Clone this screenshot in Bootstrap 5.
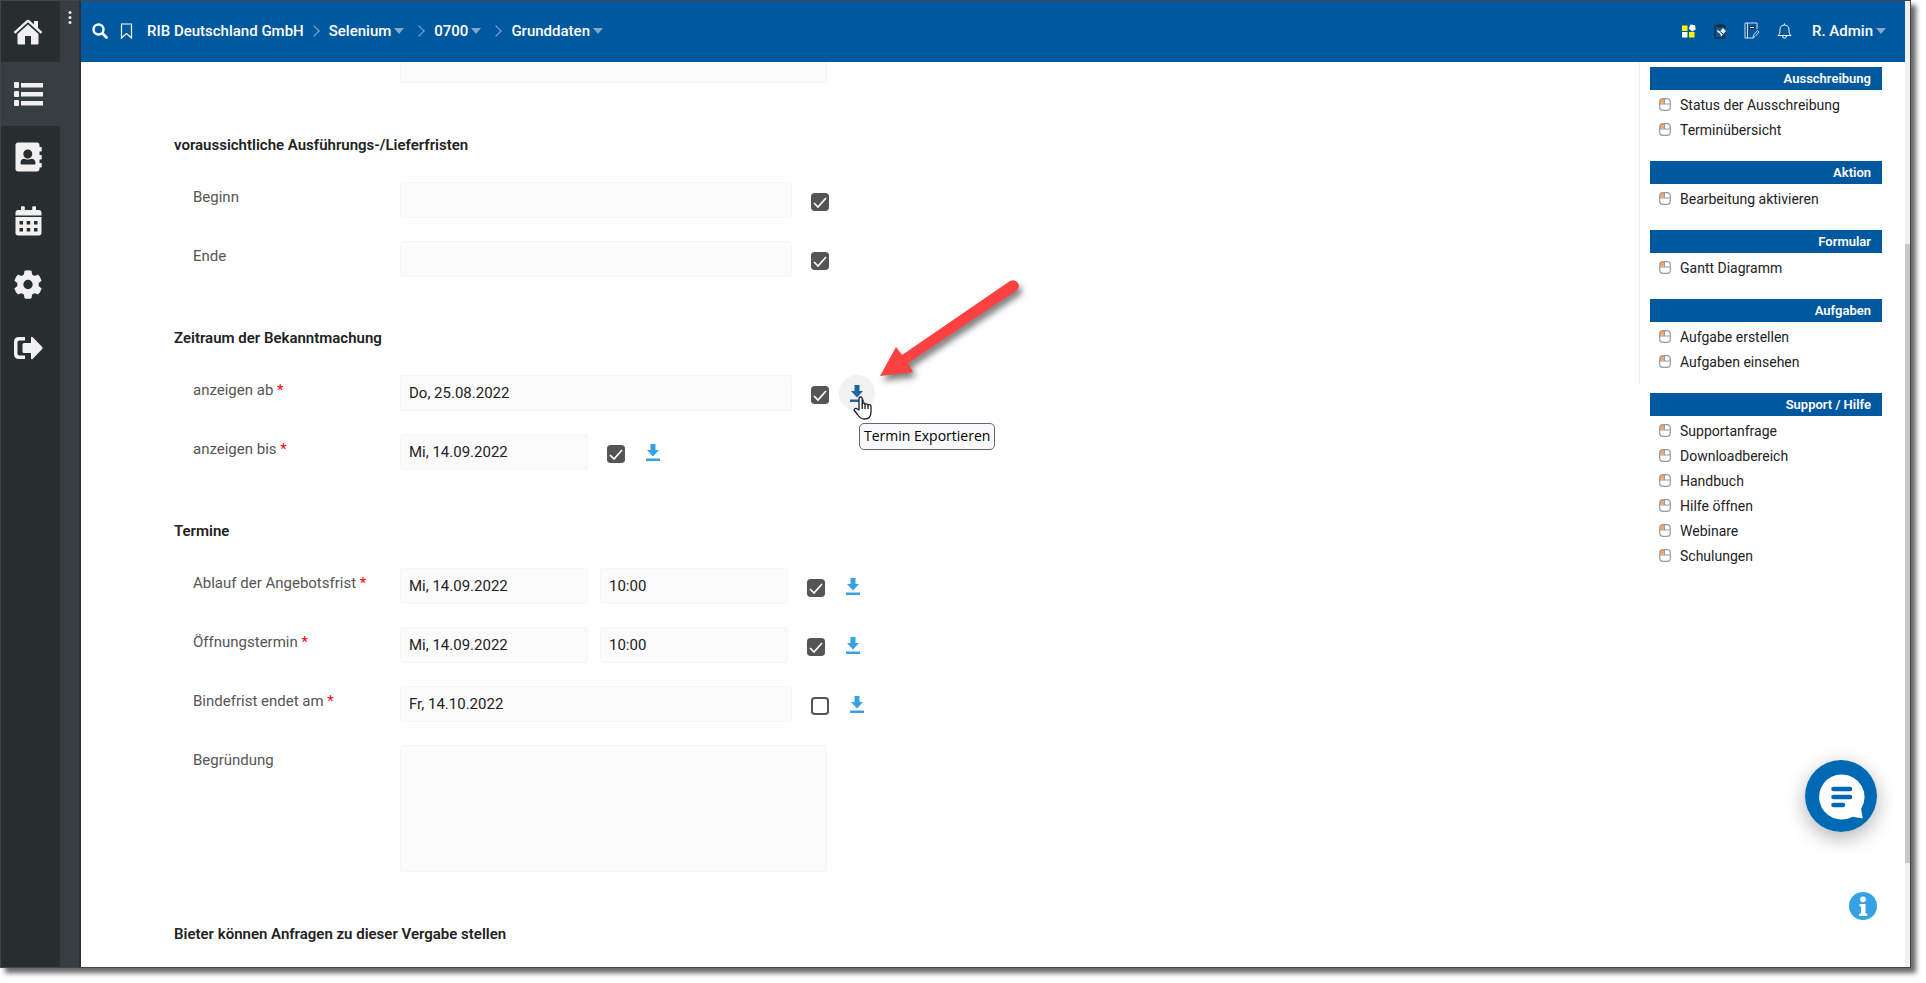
<!DOCTYPE html>
<html lang="de">
<head>
<meta charset="utf-8">
<meta name="viewport" content="width=device-width, initial-scale=1">
<title>Grunddaten</title>
<link href="https://cdn.jsdelivr.net/npm/bootstrap@5.3.0/dist/css/bootstrap.min.css" rel="stylesheet">
<style>
  :root { --brand: #00589f; --ink: #222; --sky: #36a2e4; }
  body { font-family: Roboto, "Liberation Sans", sans-serif; font-size: 15px; line-height: 20px; color: var(--ink); background: #fff; height: 100vh; overflow: hidden; padding: 0 15px 15px 0; }
  .window { height: 100%; border: 1px solid #434446; box-shadow: 5px 5px 5px rgba(0,0,0,.6); background: #fff; }
  .rail { width: 59px; background: #282d2f; }
  .rail ul { display: grid; grid-template-rows: 61px repeat(5, 1fr); height: 379px; }
  .rail a { height: 100%; padding-right: 5px; color: #f0f0f0; }
  .rail .current { background: #373e41; }
  .grip { width: 21px; background: #373e41; border-right: 2px solid #2b3033; padding-top: 8px; }
  .topbar { height: 61px; background: var(--brand); padding: 0 19px 2px 11px; color: #fff; font-weight: 500; }
  .topbar a, .topbar button { color: #fff; text-decoration: none; white-space: nowrap; }
  .drop::after { content: ""; display: inline-block; margin-left: 3px; vertical-align: 2px; border: 5px solid transparent; border-top: 6px solid #7fa9cd; border-bottom: 0; }
  .crumbs { margin-left: 14px; }
  .crumbs li { display: flex; align-items: center; }
  .crumbs li + li::before { content: ""; width: 8px; height: 8px; margin: 0 11px 0 6px; border: solid #84add0; border-width: 1px 1px 0 0; transform: rotate(45deg); }
  .crumbs li:nth-child(n+3)::before { margin: 0 11px; }
  .tools { gap: 17px; }
  .tools .user { margin-left: 3px; font-weight: 500; }
  .sheet { padding-left: 93px; overflow: hidden; }
  .scrolled { margin-top: -106px; }
  .block-title { font-size: 15px; line-height: 20px; font-weight: 600; margin: 0 0 27px; }
  .fields { display: grid; gap: 23px; margin-bottom: 51px; }
  .fields.ends-long { margin-bottom: 52px; }
  .line { display: flex; padding-left: 19px; }
  .line > label, .line > .blank { width: 207px; flex: none; padding-top: 5px; color: #555; }
  .req { color: #f00; }
  .box { height: 36px; padding: 0 8px; border: 1px solid #f5f5f5; border-radius: 3px; background: #fbfbfb; font-size: 15px; color: var(--ink); }
  .box-wide { width: 392px; }
  .box-half { width: 188px; }
  .box-half + .box-half { margin-left: 12px; }
  .box-area { width: 427px; height: 127px; resize: none; }
  .tick { width: 18px; height: 18px; margin: 11px 0 0 19px; border: 2px solid #555; border-radius: 4px; flex: none; }
  .tick:checked { background-color: #555; border-color: #555; background-size: 18px; background-image: url("data:image/svg+xml,%3csvg xmlns='http://www.w3.org/2000/svg' viewBox='0 0 18 18'%3e%3cpath d='M3 10l4 4 8-9' fill='none' stroke='white' stroke-width='1.7'/%3e%3c/svg%3e"); }
  .export { position: relative; width: 36px; height: 36px; margin-left: 10px; padding: 0; border: 0; border-radius: 50%; background: none; color: var(--sky); display: flex; align-items: center; justify-content: center; }
  .export.hovered { background: #f1f1f1; color: #1f669d; }
  .hint { position: absolute; left: 20px; top: 48px; padding: 2px 4px 3px; border: 1px solid #666; border-radius: 5px; background: #f9f9fb; color: #000; font: 14px/20px "Open Sans", "Noto Sans", sans-serif; white-space: nowrap; }
  .pointer { position: absolute; left: 14px; top: 21px; }
  .arrow { position: absolute; left: 31px; top: -103px; }
  .side { width: 266px; padding: 5px 23px 0 11px; }
  .side-line { position: relative; }
  .side-line::before { content: ""; position: absolute; left: -11px; top: -5px; bottom: 9px; border-left: 1px solid #eee; }
  .side h3 { margin: 0; height: 23px; padding-right: 11px; line-height: 23px; font-size: 13px; font-weight: 600; text-align: right; color: #fff; background: var(--brand); }
  .side ul { padding: 2px 0 19px 9px; margin: 0; list-style: none; }
  .side a { display: flex; align-items: center; gap: 9px; height: 25px; font-size: 14px; color: var(--ink); text-decoration: none; }
  .track { width: 5px; background: #f0f0f2; }
  .before { flex-grow: 243; } .thumb { flex-grow: 619; background: #c8c8c9; } .after { flex-grow: 104; }
  .floaters { position: absolute; right: 33px; bottom: 47px; display: flex; flex-direction: column; align-items: flex-end; gap: 60px; }
  .floaters button { border: 0; padding: 0; border-radius: 50%; line-height: 0; background: none; }
  .floaters .chat { box-shadow: 0 6px 20px rgba(0,0,0,.3); }
</style>
</head>
<body>
<svg width="0" height="0" class="position-absolute" aria-hidden="true">
  <symbol id="dl" viewBox="0 0 14 17"><path d="M4.500 0h5v6H13L7 12.500 1 6h3.500zM0 14.500h14V17H0z" fill="currentColor"/></symbol>
  <symbol id="mouse" viewBox="0 0 12 13"><path d="M2.500 1H5v4.500H1V3z" fill="#f9a566"/><rect x=".7" y=".7" width="10.600" height="11.600" rx="3.300" fill="none" stroke="#999" stroke-width="1.200"/><path d="M1 6h10M5.500 1v5" stroke="#999" fill="none"/></symbol>
</svg>
<div class="window d-flex position-relative">
  <nav class="rail flex-shrink-0" aria-label="Hauptmenü">
    <ul class="list-unstyled m-0">
      <li><a href="#" class="d-flex align-items-center justify-content-center" aria-label="Start"><svg width="30" height="26" viewBox="0 0 30 26" fill="currentColor"><path d="M15 5.500 4.500 15v9c0 1 .5 1.500 1.500 1.500h6V17h6v8.500h6c1 0 1.500-.5 1.500-1.500v-9z"/><path d="M.7 13 13.300 1.500c1-.9 2.400-.9 3.400 0L21 5.400V2h4v7l4.300 4-1.600 1.700L15 3.300 2.300 14.700z"/></svg></a></li>
      <li class="current"><a href="#" class="d-flex align-items-center justify-content-center" aria-label="Liste"><svg width="30" height="26" viewBox="0 0 30 26" fill="currentColor"><rect x="1" y="1" width="5" height="6" rx="1"/><rect x="1" y="10" width="5" height="6" rx="1"/><rect x="1" y="19" width="5" height="6" rx="1"/><path d="M8 2h22v4.500H8zM8 11h22v4.500H8zM8 20h22v4.500H8z"/></svg></a></li>
      <li><a href="#" class="d-flex align-items-center justify-content-center" aria-label="Kontakte"><svg width="27" height="30" viewBox="0 0 27 30" fill="currentColor"><path fill-rule="evenodd" d="M3 .5h19c1.500 0 2.500 1 2.500 2.500v2h1.500q.8 0 .8.800v3q0 .7-.8.700h-1.500V13H26q.8 0 .8.700v3q0 .8-.8.800h-1.500V21H26q.8 0 .8.700v3q0 .8-.8.800h-1.500V27c0 1.500-1 2.500-2.500 2.500H3C1.500 29.500.5 28.500.5 27V3C.5 1.500 1.500.5 3 .5zM12.800 7.500a4.500 4.500 0 1 0 0 9 4.500 4.500 0 0 0 0-9zM5.500 21c0 1 .5 1.500 1.500 1.500h12c1 0 1.500-.5 1.500-1.500 0-2.500-1.500-4.200-4-4.200-1.500 1-5.800 1-7.300 0-2.500 0-3.700 1.700-3.700 4.200z"/></svg></a></li>
      <li><a href="#" class="d-flex align-items-center justify-content-center" aria-label="Kalender"><svg width="27" height="30" viewBox="0 0 27 30" fill="currentColor"><path d="M.5 9.500V7C.5 5 1.500 4 3 4h3V1q0-.8.800-.8h2q1 0 1 .8v3h7.400V1q0-.8 1-.8h2q.8 0 .8.800v3h3c1.500 0 2.500 1 2.500 3v2.500z"/><path fill-rule="evenodd" d="M.5 11h26v16c0 1.500-1 2.500-2.500 2.500H3C1.500 29.500.5 28.500.5 27zM4.500 15v3.500H8V15zm7.200 0v3.500h3.500V15zm7.300 0v3.500h3.500V15zM4.500 22v3.500H8V22zm7.200 0v3.500h3.500V22zm7.300 0v3.500h3.500V22z"/></svg></a></li>
      <li><a href="#" class="d-flex align-items-center justify-content-center" aria-label="Einstellungen"><svg width="28" height="29" viewBox="0 0 28 29" fill="currentColor"><path fill-rule="evenodd" d="M10.500.8Q14-.2 17.500.8l.6 3.700 2.500 1.400 3.500-1.300q2.600 2.700 3.500 6.100l-2.900 2.400v2.900l2.900 2.400q-.9 3.400-3.500 6.100l-3.500-1.300-2.500 1.400-.6 3.700q-3.500 1-7 0l-.6-3.700-2.500-1.400-3.500 1.300q-2.600-2.700-3.500-6.100L3.300 16v-2.900L.4 10.700q.9-3.400 3.500-6.100l3.500 1.300 2.500-1.400zM14 9.800a4.700 4.700 0 1 0 0 9.400 4.700 4.700 0 0 0 0-9.400z"/></svg></a></li>
      <li><a href="#" class="d-flex align-items-center justify-content-center" aria-label="Abmelden"><svg width="30" height="24" viewBox="0 0 30 24" fill="currentColor"><path d="M12 1v3.500H6.500Q4.500 4.500 4.500 6.500v11q0 2 2 2H12V23H6q-5 0-5-5V6q0-5 5-5z"/><path d="M18 1.500q.4-1.500 1.800-.3L29 10.800q1.200 1.200 0 2.400l-9.200 9.600Q18.400 24 18 22.500V17h-7q-1.500 0-1.500-1.500v-7Q9.500 7 11 7h7z"/></svg></a></li>
    </ul>
  </nav>
  <div class="grip flex-shrink-0 text-center lh-1"><svg width="4" height="16" viewBox="0 0 4 16" fill="#e8e8e8" class="d-block mx-auto"><circle cx="2" cy="3.500" r="1.500"/><circle cx="2" cy="8.500" r="1.500"/><circle cx="2" cy="13.500" r="1.500"/></svg></div>

  <div class="flex-grow-1 d-flex flex-column overflow-hidden">
    <header class="topbar d-flex align-items-center flex-shrink-0">
      <a href="#" aria-label="Suche" class="d-flex"><svg width="16" height="16" viewBox="0 0 16 16" fill="none" stroke="#fff"><circle cx="6.500" cy="6.500" r="5" stroke-width="2.400"/><path d="m10.500 10.500 4 4" stroke-width="2.800" stroke-linecap="round"/></svg></a>
      <a href="#" aria-label="Lesezeichen" class="d-flex ms-2 ps-1"><svg width="13" height="16" viewBox="0 0 13 16" fill="none" stroke="#fff" stroke-width="1.200"><path d="M1.500 1h10v14l-5-4.500-5 4.500z"/></svg></a>
      <ol class="crumbs list-unstyled d-flex mb-0">
        <li><a href="#">RIB Deutschland GmbH</a></li>
        <li><a href="#" class="drop">Selenium</a></li>
        <li><a href="#" class="drop">0700</a></li>
        <li><a href="#" class="drop">Grunddaten</a></li>
      </ol>
      <div class="tools d-flex align-items-center ms-auto">
        <a href="#" aria-label="Module" class="d-flex"><svg width="14" height="14" viewBox="0 0 14 14"><path d="M0 1.500h5.500V7H0zM7 8h5.500v5.500H7z" fill="#fff500"/><path d="M0 8h5.500v5.500H0z" fill="#fff"/><path d="m8.500.5 4.500.8.700 4.200-3.700 2-3.300-3z" fill="#fff"/></svg></a>
        <a href="#" aria-label="Aufgaben" class="d-flex"><svg width="14" height="16" viewBox="0 0 14 16"><path d="M4 2.500h1.500q1.500-3 3 0H11q.5 0 .5.500v12H2V3q0-.5.500-.5z" fill="none" stroke="#222d38" stroke-width="1.600"/><path d="M4 2h6v2.500H4z" fill="#222d38"/><path d="m4 7 3 1.500L10 5l3 3-5 5.500-1-3L4.500 9z" fill="#fff"/><path d="m7 8.500 3 2.500" stroke="#222d38"/></svg></a>
        <a href="#" aria-label="Journal" class="d-flex"><svg width="16" height="17" viewBox="0 0 16 17" fill="none" stroke="#cfdfec"><path d="M9 16H1V1h12v6M3.500 1v15"/><path d="M5.500 4.500h5v2h-5z" stroke="#132a40" fill="#fff"/><path d="m9 16 .5-3 4-4.500 1.500 1.500-4 4.500z"/></svg></a>
        <a href="#" aria-label="Benachrichtigungen" class="d-flex"><svg width="15" height="16" viewBox="0 0 15 16" fill="none" stroke="#fff" stroke-linejoin="round"><path d="M1 12.500c1.500-1.500 2-2.500 2-6C3 3.500 5 2 7.500 2S12 3.500 12 6.500c0 3.500.5 4.500 2 6zM7.500.5V2M5.500 12.700q0 2.500 2 2.500t2-2.500"/></svg></a>
        <button type="button" class="user drop bg-transparent border-0 p-0">R. Admin</button>
      </div>
    </header>

    <div class="d-flex flex-grow-1 overflow-hidden">
      <main class="sheet flex-grow-1">
        <form class="scrolled">
          <div class="fields ends-long">
            <div class="line"><span class="blank"></span><textarea class="box box-area" aria-label="Bemerkung" readonly></textarea></div>
          </div>

          <h2 class="block-title">voraussichtliche Ausführungs-/Lieferfristen</h2>
          <div class="fields">
            <div class="line"><label for="f1">Beginn</label><input id="f1" class="box box-wide" readonly><input type="checkbox" class="form-check-input tick" aria-label="Beginn anzeigen" checked></div>
            <div class="line"><label for="f2">Ende</label><input id="f2" class="box box-wide" readonly><input type="checkbox" class="form-check-input tick" aria-label="Ende anzeigen" checked></div>
          </div>

          <h2 class="block-title">Zeitraum der Bekanntmachung</h2>
          <div class="fields">
            <div class="line"><label for="f3">anzeigen ab <span class="req">*</span></label><input id="f3" class="box box-wide" value="Do, 25.08.2022" readonly><input type="checkbox" class="form-check-input tick" aria-label="Beginn veröffentlichen" checked>
              <button type="button" class="export hovered" aria-label="Termin exportieren"><svg width="14" height="17"><use href="#dl"/></svg>
                <svg class="arrow" width="160" height="120" viewBox="0 0 160 120"><g style="filter:drop-shadow(3px 5px 3px rgba(0,0,0,.5))" fill="#fd4143"><path d="M10 104 26 75l6 8 108-74q5-2 8 2 2 4-1 7L38 91l5 9z"/></g></svg>
                <svg class="pointer" width="20" height="24" viewBox="0 0 20 24" fill="#fff" stroke="#1b1b2a" stroke-width="1.300" stroke-linejoin="round"><path d="M6 14V2.500Q6 1 7.500 1T9.200 2.500V8q0-1 1.400-1T12 8.500Q12 7.800 13.200 7.800T15 9.500q0-.8 1.200-.8 1.800 0 1.800 2V16c0 4-2 7-6.500 7C8 23 6 21 4.500 18.500L1.300 14.500q-.6-1.500 1-2 1-.2 2 .5z"/><path d="M9.200 8v5M12 8.500V13M15 9.500V13" fill="none"/></svg>
                <span class="hint" role="tooltip">Termin Exportieren</span>
              </button></div>
            <div class="line"><label for="f4">anzeigen bis <span class="req">*</span></label><input id="f4" class="box box-half" value="Mi, 14.09.2022" readonly><input type="checkbox" class="form-check-input tick" aria-label="Ende veröffentlichen" checked><button type="button" class="export" aria-label="Termin exportieren"><svg width="14" height="17"><use href="#dl"/></svg></button></div>
          </div>

          <h2 class="block-title">Termine</h2>
          <div class="fields ends-long">
            <div class="line"><label for="f5">Ablauf der Angebotsfrist <span class="req">*</span></label><input id="f5" class="box box-half" value="Mi, 14.09.2022" readonly><input class="box box-half" value="10:00" aria-label="Uhrzeit Angebotsfrist" readonly><input type="checkbox" class="form-check-input tick" aria-label="Angebotsfrist veröffentlichen" checked><button type="button" class="export" aria-label="Termin exportieren"><svg width="14" height="17"><use href="#dl"/></svg></button></div>
            <div class="line"><label for="f6">Öffnungstermin <span class="req">*</span></label><input id="f6" class="box box-half" value="Mi, 14.09.2022" readonly><input class="box box-half" value="10:00" aria-label="Uhrzeit Öffnungstermin" readonly><input type="checkbox" class="form-check-input tick" aria-label="Öffnungstermin veröffentlichen" checked><button type="button" class="export" aria-label="Termin exportieren"><svg width="14" height="17"><use href="#dl"/></svg></button></div>
            <div class="line"><label for="f7">Bindefrist endet am <span class="req">*</span></label><input id="f7" class="box box-wide" value="Fr, 14.10.2022" readonly><input type="checkbox" class="form-check-input tick" aria-label="Bindefrist veröffentlichen"><button type="button" class="export" aria-label="Termin exportieren"><svg width="14" height="17"><use href="#dl"/></svg></button></div>
            <div class="line"><label for="f8">Begründung</label><textarea id="f8" class="box box-area" readonly></textarea></div>
          </div>

          <h2 class="block-title">Bieter können Anfragen zu dieser Vergabe stellen</h2>
        </form>
      </main>

      <aside class="side flex-shrink-0">
        <div class="side-line">
          <h3>Ausschreibung</h3>
          <ul>
            <li><a href="#"><svg width="12" height="13"><use href="#mouse"/></svg>Status der Ausschreibung</a></li>
            <li><a href="#"><svg width="12" height="13"><use href="#mouse"/></svg>Terminübersicht</a></li>
          </ul>
          <h3>Aktion</h3>
          <ul>
            <li><a href="#"><svg width="12" height="13"><use href="#mouse"/></svg>Bearbeitung aktivieren</a></li>
          </ul>
          <h3>Formular</h3>
          <ul>
            <li><a href="#"><svg width="12" height="13"><use href="#mouse"/></svg>Gantt Diagramm</a></li>
          </ul>
          <h3>Aufgaben</h3>
          <ul>
            <li><a href="#"><svg width="12" height="13"><use href="#mouse"/></svg>Aufgabe erstellen</a></li>
            <li><a href="#"><svg width="12" height="13"><use href="#mouse"/></svg>Aufgaben einsehen</a></li>
          </ul>
        </div>
        <h3>Support / Hilfe</h3>
        <ul>
          <li><a href="#"><svg width="12" height="13"><use href="#mouse"/></svg>Supportanfrage</a></li>
          <li><a href="#"><svg width="12" height="13"><use href="#mouse"/></svg>Downloadbereich</a></li>
          <li><a href="#"><svg width="12" height="13"><use href="#mouse"/></svg>Handbuch</a></li>
          <li><a href="#"><svg width="12" height="13"><use href="#mouse"/></svg>Hilfe öffnen</a></li>
          <li><a href="#"><svg width="12" height="13"><use href="#mouse"/></svg>Webinare</a></li>
          <li><a href="#"><svg width="12" height="13"><use href="#mouse"/></svg>Schulungen</a></li>
        </ul>
      </aside>
    </div>
  </div>

  <div class="track d-flex flex-column flex-shrink-0"><div class="before"></div><div class="thumb"></div><div class="after"></div></div>

  <div class="floaters">
    <button type="button" class="chat" aria-label="Chat"><svg width="72" height="72" viewBox="0 0 72 72"><circle cx="36" cy="36" r="36" fill="#0069b4"/><path d="M36.500 14.500a22.500 22.500 0 1 0 11 42.200l10.300 1.800-1.700-9.500a22.500 22.500 0 0 0-19.600-34.500z" fill="#fff"/><path d="M28.500 29h16.500M28.500 37h16.500M28.500 45H38" stroke="#0069b4" stroke-width="4.500" stroke-linecap="round"/></svg></button>
    <button type="button" aria-label="Information"><svg width="28" height="28" viewBox="0 0 28 28"><circle cx="14" cy="14" r="14" fill="var(--sky)"/><circle cx="14" cy="7.300" r="2.900" fill="#fff"/><path d="M10.500 12h6v9.500h1.700V24h-8v-2.500H12v-7h-1.500z" fill="#fff"/></svg></button>
  </div>
</div>
<script src="https://cdn.jsdelivr.net/npm/bootstrap@5.3.0/dist/js/bootstrap.bundle.min.js"></script>
</body>
</html>
